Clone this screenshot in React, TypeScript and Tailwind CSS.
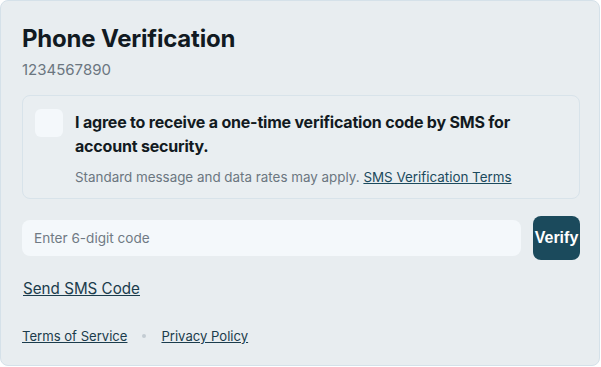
import React from 'react'

export default function App() {
  return (
    <div className="w-[601px] h-[367px] bg-white" style={{ fontFamily: 'Inter, "Noto Sans", sans-serif' }}>
      <div className="w-[600px] h-[366px] rounded-lg border border-[#d5e1e9] bg-[#e8edf0] pl-[21px] pr-[19px] pt-[22px]">
        {/* Header */}
        <h1 className="text-[24px] leading-[32px] font-bold text-[#111a22] tracking-[-0.2px]">Phone Verification</h1>
        <p className="mt-[5px] text-[15px] leading-[20px] text-[#6b7680]">1234567890</p>

        {/* Consent box */}
        <div className="mt-[15px] flex gap-[12px] rounded-lg border border-[#d8e3ea] bg-[#e9eef1] pl-[12px] pr-4 pt-[13px] pb-[12px]">
          <div className="h-[28px] w-[28px] shrink-0 rounded-md bg-[#f4f8fb]" />
          <div className="mt-px">
            <p className="text-[16px] leading-[24px] font-bold text-[#121a21] tracking-[-0.2px]">
              I agree to receive a one-time verification code by SMS for account security.
            </p>
            <p className="mt-[10px] text-[13.4px] leading-[18px] text-[#6b7680]">
              Standard message and data rates may apply.{' '}
              <a href="#" className="text-[#1b4a5d] underline">SMS Verification Terms</a>
            </p>
          </div>
        </div>

        {/* Code entry */}
        <div className="mt-[17px] flex items-center gap-[12px]">
          <input
            type="text"
            placeholder="Enter 6-digit code"
            className="h-[36px] w-[499px] shrink-0 rounded-lg bg-[#f4f8fb] px-3 text-[13.6px] text-[#111] placeholder:text-[#707a84] outline-none"
          />
          <button
            className="h-[44px] w-[47px] shrink-0 rounded-lg bg-[#1b4a5c] text-[16px] font-bold text-white flex items-center justify-center"
            style={{ fontFamily: '"Liberation Sans", Arial, sans-serif' }}
          >
            Verify
          </button>
        </div>

        <a href="#" className="mt-[18px] inline-block pl-px text-[15.2px] leading-[22px] text-[#1b3c4c] underline">
          Send SMS Code
        </a>

        {/* Footer links */}
        <div className="mt-[26px] flex items-center gap-[15px] text-[13.1px] leading-[20px]">
          <a href="#" className="text-[#1b3c4c] underline">Terms of Service</a>
          <span className="h-[4px] w-[4px] rounded-full bg-[#c3ccd3]" />
          <a href="#" className="text-[#1b3c4c] underline">Privacy Policy</a>
        </div>
      </div>
    </div>
  )
}
